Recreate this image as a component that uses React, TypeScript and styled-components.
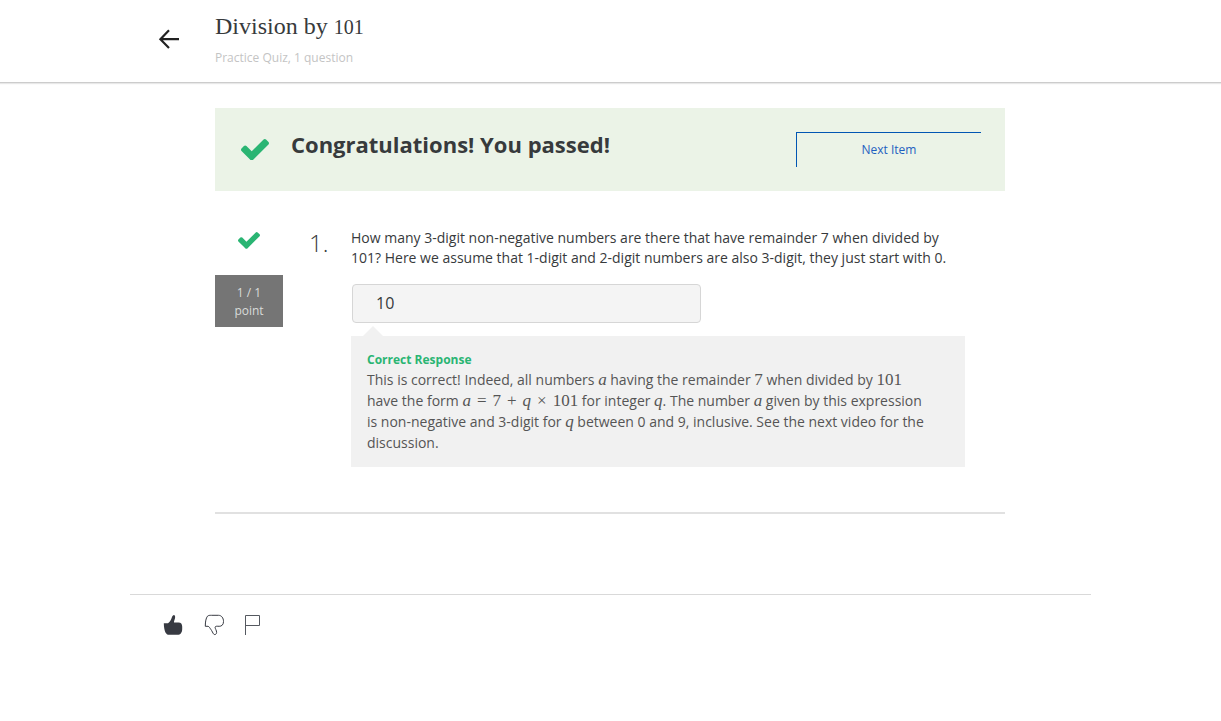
import React from "react";
import styled, { createGlobalStyle } from "styled-components";

const GlobalStyle = createGlobalStyle`
  *, *::before, *::after { box-sizing: border-box; }
  body {
    margin: 0;
    background: #fff;
    color: #373a3c;
    font-family: "Open Sans", "Noto Sans", sans-serif;
    font-size: 14px;
    line-height: 20px;
  }
  h1, h2, h3, p { margin: 0; }
`;

const Header = styled.header`
  border-bottom: 1px solid #ccc;
  box-shadow: 0 1px 1px #e8e8e8;
`;

const HeaderInner = styled.div`
  display: flex;
  align-items: flex-start;
  max-width: 961px;
  height: 82px;
  margin: 0 auto;
  padding: 12px 28px 0;
`;

const IconButton = styled.button`
  display: flex;
  padding: 0;
  border: 0;
  background: none;
  color: #373a42;
  cursor: pointer;
`;

const BackButton = styled(IconButton)`
  width: 57px;
  padding-top: 17px;
  color: #222;
`;

const Title = styled.h1`
  font-family: "Liberation Serif", serif;
  font-size: 24px;
  font-weight: 400;
  line-height: 28px;
`;

const Numerals = styled.span`
  font-size: 20px;
  line-height: 20px;
`;

const Subtitle = styled.p`
  padding-top: 8px;
  color: #c4c4c4;
  font-size: 12px;
`;

const Main = styled.main`
  max-width: 791px;
  margin: 25px auto 0;
  padding-right: 1px;
`;

const Banner = styled.section`
  display: flex;
  align-items: flex-start;
  padding: 24px 24px 24px 26px;
  background: #ebf3e7;
`;

const BannerTitle = styled.h2`
  flex: 1;
  padding-left: 22px;
  font-size: 22px;
  font-weight: 700;
  line-height: 24px;
`;

const BannerCheck = styled.div`
  display: flex;
  padding-top: 7px;
`;

const NextButton = styled.button`
  width: 185px;
  height: 35px;
  padding: 0;
  border: solid #0156b3;
  border-width: 1px 0 0 1px;
  background: none;
  color: #1f5fc0;
  font: 12px/20px "Open Sans", sans-serif;
  cursor: pointer;
`;

const Question = styled.section`
  display: flex;
  align-items: flex-start;
  padding: 37px 40px 45px 0;
  border-bottom: 2px solid #e1e1e1;
`;

const Score = styled.div`
  display: flex;
  flex-direction: column;
  align-items: center;
  gap: 26px;
  width: 68px;
  padding-top: 4px;
`;

const Points = styled.div`
  width: 100%;
  padding: 9px 16px 7px;
  background: #757575;
  color: #d9dcda;
  font-size: 12px;
  line-height: 18px;
  text-align: center;
`;

const Number = styled.div`
  width: 68px;
  padding-left: 26px;
  font-size: 24px;
  font-weight: 300;
  line-height: 30px;
`;

const Body = styled.div`
  flex: 1;
`;

const Prompt = styled.label`
  display: block;
`;

const Answer = styled.input`
  display: block;
  width: 349px;
  height: 39px;
  margin: 16px 0 13px 1px;
  padding: 0 23px 2px;
  border: 1px solid #d6d6d6;
  border-radius: 4px;
  background: #f4f4f4;
  color: #373a3c;
  font: 16px/24px "Open Sans", sans-serif;
`;

const Feedback = styled.div`
  position: relative;
  padding: 14px 36px 14px 16px;
  background: #f1f1f1;
  color: #555;
  line-height: 21px;

  &::before {
    content: "";
    position: absolute;
    left: 12px;
    bottom: 100%;
    border: solid transparent;
    border-width: 0 10px 10px;
    border-bottom-color: #f1f1f1;
  }
`;

const Verdict = styled.h3`
  color: #2ab573;
  font-size: 12px;
  font-weight: 700;
  line-height: 19px;
`;

const Num = styled.span`
  font-family: "Liberation Serif", serif;
  font-size: 17px;
  line-height: 16px;
`;

const Var = styled.var`
  font-family: "Liberation Serif", serif;
  font-size: 17px;
  font-style: italic;
  line-height: 16px;
`;

const Operator = styled(Num)`
  padding: 0 6px;
`;

const Equation = styled.span`
  white-space: nowrap;
`;

const Footer = styled.footer`
  display: flex;
  align-items: flex-start;
  gap: 21px;
  max-width: 961px;
  margin: 80px auto 0;
  padding: 19px 33px;
  border-top: 1px solid #d9d9d9;
`;

const Check = ({ width }: { width: number }) => (
  <svg width={width} viewBox="121 334 1550 1188" fill="#2ab573" aria-hidden="true">
    <path d="M1671 566q0 40-28 68l-724 724-136 136q-28 28-68 28t-68-28l-136-136-362-362q-28-28-28-68t28-68l136-136q28-28 68-28t68 28l294 295 656-657q28-28 68-28t68 28l136 136q28 28 28 68z" />
  </svg>
);

export default function App() {
  return (
    <>
      <GlobalStyle />
      <Header>
        <HeaderInner>
          <BackButton aria-label="Back">
            <svg width="22" height="20" viewBox="0 0 22 20" fill="none" stroke="currentColor" strokeWidth="2.2">
              <path d="M11 1.2 2.4 10.2 11 19M2.4 10.2H21" />
            </svg>
          </BackButton>
          <div>
            <Title>Division by <Numerals>101</Numerals></Title>
            <Subtitle>Practice Quiz, 1 question</Subtitle>
          </div>
        </HeaderInner>
      </Header>
      <Main>
        <Banner>
          <BannerCheck><Check width={28} /></BannerCheck>
          <BannerTitle>Congratulations! You passed!</BannerTitle>
          <NextButton>Next Item</NextButton>
        </Banner>
        <Question>
          <Score>
            <Check width={22} />
            <Points>1 / 1<br />point</Points>
          </Score>
          <Number>1.</Number>
          <Body>
            <Prompt htmlFor="answer">
              How many 3-digit non-negative numbers are there that have remainder 7 when divided by 101? Here we assume
              that 1-digit and 2-digit numbers are also 3-digit, they just start with 0.
            </Prompt>
            <Answer id="answer" type="text" defaultValue="10" readOnly />
            <Feedback>
              <Verdict>Correct Response</Verdict>
              <p>
                This is correct! Indeed, all numbers <Var>a</Var> having the remainder <Num>7</Num> when divided
                by <Num>101</Num> have the form{" "}
                <Equation>
                  <Var>a</Var><Operator>=</Operator><Num>7</Num><Operator>+</Operator><Var>q</Var><Operator>×</Operator><Num>101</Num>
                </Equation>{" "}
                for integer <Var>q</Var>. The number <Var>a</Var> given by this expression is non-negative and 3-digit
                for <Var>q</Var> between 0 and 9, inclusive. See the next video for the discussion.
              </p>
            </Feedback>
          </Body>
        </Question>
      </Main>
      <Footer>
        <IconButton aria-label="Like">
          <svg width="20" height="22" viewBox="0 0 20 22" fill="currentColor">
            <path d="M.8 9.2H5C7.200 7.800 8.200 5.500 8.800 3.500 9.300 1.900 10.100 1 11 1 12.300 1.300 12.400 3.200 11.800 5 11.500 6.200 10.900 7.200 11 8.400H15.500C18 8.400 19.200 10 19.200 12.500V15C19.200 18.500 17.500 20.800 14.500 20.800H6C3 20.800 1 17.500.8 9.200Z" />
          </svg>
        </IconButton>
        <IconButton aria-label="Dislike">
          <svg width="20" height="22" viewBox="0 0 20 22" fill="none" stroke="currentColor" strokeWidth="1">
            <path d="M1.300 12.300C1.300 7.500 2 4 3.500 2.200 4.500 1.300 5.700 1.300 7.500 1.300H14.500C17.500 1.300 19.500 4 19.500 7.500 19.500 11 17.500 12.300 15.200 12.300 13.500 12.300 11.300 11.800 11.100 13.200 11 14.500 12.700 16.500 12.600 18.500 12.500 20.200 11 21.200 9.800 20.200 8.800 19.200 8.100 17 6.800 15.300 5.900 14.100 5 12.300 4 12.300Z" />
          </svg>
        </IconButton>
        <IconButton aria-label="Report an issue">
          <svg width="15" height="22" viewBox="0 0 15 22" fill="none" stroke="#555960" strokeWidth="1">
            <path d="M.5 21V1.500H14.500V11.500H.5" />
          </svg>
        </IconButton>
      </Footer>
    </>
  );
}
